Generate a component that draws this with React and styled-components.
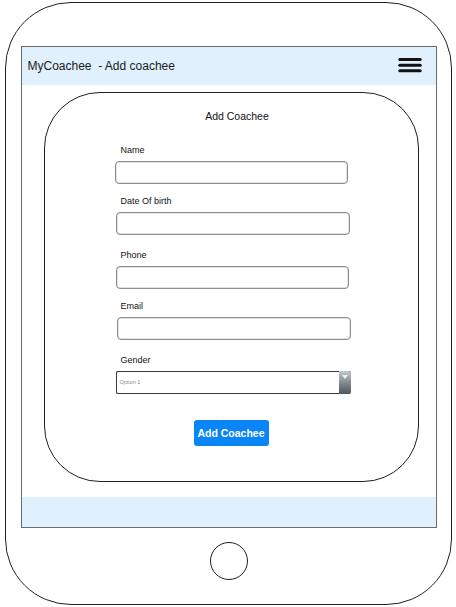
import React from "react";
import styled, { createGlobalStyle } from "styled-components";

const GlobalStyle = createGlobalStyle`
  html, body { margin: 0; padding: 0; background: #fff; }
  body { font-family: "Liberation Sans", Arial, sans-serif; color: #111; }
  * { box-sizing: border-box; }
`;

const Tablet = styled.div`
  margin: 2px 0 0 5px;
  width: 447px;
  height: 603px;
  border: 1.5px solid #1f1f1f;
  border-radius: 66px;
  display: flex;
  flex-direction: column;
  align-items: center;
  padding-top: 43px;
`;

const Screen = styled.div`
  width: 416px;
  height: 482px;
  border: 1px solid #6a6a6a;
  display: flex;
  flex-direction: column;
  background: #fff;
`;

const Band = styled.div`
  height: ${(p) => p.$h}px;
  background: #e0f0fc;
  flex: none;
`;

const Header = styled(Band)`
  display: flex;
  align-items: center;
  justify-content: space-between;
  padding: 0 14px 0 6px;
  font-size: 12px;
  color: #1a1a1a;
  white-space: pre;
`;

const Main = styled.div`
  flex: 1;
  padding: 7px 0 0 22px;
`;

const Card = styled.div`
  width: 375px;
  height: 390px;
  border: 1.5px solid #1f1f1f;
  border-radius: 56px;
  display: flex;
  flex-direction: column;
  padding-top: 15.5px;
`;

const Title = styled.div`
  font-size: 10.5px;
  line-height: 14px;
  text-align: center;
  padding-left: 12px;
  color: #111;
`;

const Form = styled.div`
  display: flex;
  flex-direction: column;
  padding-left: 70px;
  margin-top: 21px;
`;

const Field = styled.div`
  display: flex;
  flex-direction: column;
  margin-top: ${(p) => p.$gap || 0}px;
`;

const Label = styled.div`
  font-size: 9px;
  line-height: 12px;
  height: 12px;
  padding-left: 6px;
  margin-bottom: 5px;
  color: #111;
`;

const TextBox = styled.div`
  margin-left: ${(p) => p.$shift}px;
  width: ${(p) => p.$w}px;
  height: 23px;
  border: 1px solid #8d8d8d;
  border-radius: 4px;
  background: #fff;
  box-shadow: inset 0 0 0 0.5px #c8c8c8;
`;

const Select = styled.div`
  margin-left: 1px;
  width: 235px;
  height: 23px;
  border: 1px solid #3a3a3a;
  border-right: none;
  border-radius: 2px;
  display: flex;
  align-items: center;
  background: #fff;
`;

const SelectText = styled.span`
  flex: 1;
  font-size: 5.5px;
  color: #8a8a8a;
  padding-left: 3px;
`;

const SelectButton = styled.div`
  width: 12px;
  height: 23px;
  margin-top: -1px;
  margin-bottom: -1px;
  border-radius: 0 3px 3px 0;
  background: linear-gradient(#c4c9cd, #7d868d 55%, #4e575e);
  display: flex;
  justify-content: center;
  padding-top: 4px;
`;

const Button = styled.button`
  align-self: center;
  margin-top: 26px;
  width: 75px;
  height: 26px;
  border: none;
  border-radius: 3px;
  background: #0a85f7;
  color: #fff;
  font-family: "Liberation Sans", Arial, sans-serif;
  font-weight: bold;
  font-size: 10.5px;
  padding: 0;
`;

const HomeButton = styled.div`
  margin-top: 14px;
  width: 38px;
  height: 38px;
  border: 1.5px solid #1f1f1f;
  border-radius: 50%;
`;

const Hamburger = () => (
  <svg width="24" height="18" viewBox="0 0 24 18">
    <g stroke="#111" strokeWidth="3" strokeLinecap="round">
      <line x1="1.8" y1="2.5" x2="22.2" y2="2.5" />
      <line x1="1.8" y1="8.2" x2="22.2" y2="8.2" />
      <line x1="1.8" y1="13.8" x2="22.2" y2="13.8" />
    </g>
  </svg>
);

const fields = [
  { label: "Name", gap: 0, shift: 0, w: 233 },
  { label: "Date Of birth", gap: 11, shift: 1, w: 234 },
  { label: "Phone", gap: 14, shift: 1, w: 233 },
  { label: "Email", gap: 11, shift: 2, w: 234 },
];

export default function App() {
  return (
    <>
      <GlobalStyle />
      <Tablet>
        <Screen>
          <Header $h={38}>
            <span>MyCoachee  - Add coachee</span>
            <Hamburger />
          </Header>
          <Main>
            <Card>
              <Title>Add Coachee</Title>
              <Form>
                {fields.map((f) => (
                  <Field key={f.label} $gap={f.gap}>
                    <Label>{f.label}</Label>
                    <TextBox $shift={f.shift} $w={f.w} />
                  </Field>
                ))}
                <Field $gap={14}>
                  <Label>Gender</Label>
                  <Select>
                    <SelectText>Option 1</SelectText>
                    <SelectButton>
                      <svg width="6" height="4" viewBox="0 0 6 4">
                        <path d="M0 0 L6 0 L3 4 Z" fill="#f2f2f2" />
                      </svg>
                    </SelectButton>
                  </Select>
                </Field>
              </Form>
              <Button>Add Coachee</Button>
            </Card>
          </Main>
          <Band $h={30} />
        </Screen>
        <HomeButton />
      </Tablet>
    </>
  );
}
